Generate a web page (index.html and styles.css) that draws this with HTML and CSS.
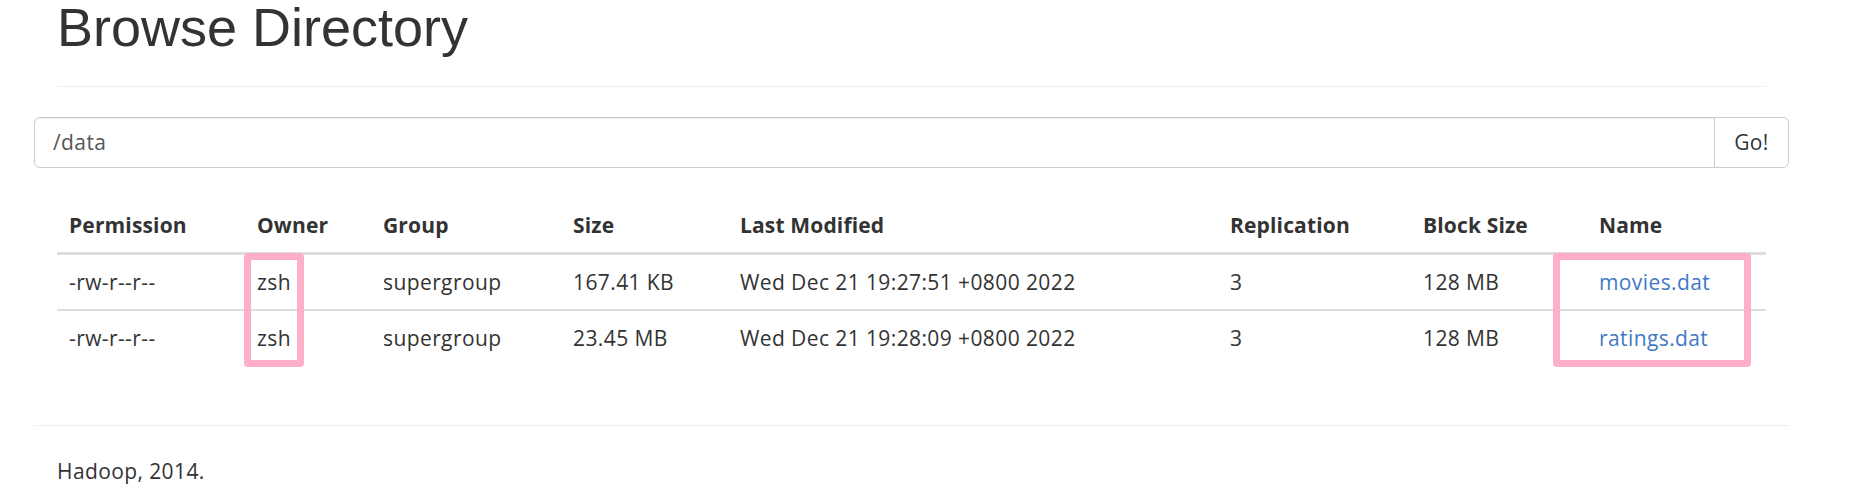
FILE: index.html
```html
<!DOCTYPE html>
<html lang="en">
<head>
<meta charset="utf-8">
<title>Browsing HDFS</title>
<link rel="stylesheet" href="styles.css">
</head>
<body>
<div class="container">
  <div class="page-header"><h1>Browse Directory</h1></div>
  <div class="row">
    <form class="input-group" onsubmit="return false;">
      <input type="text" class="form-control" value="/data">
      <button class="btn" type="button">Go!</button>
    </form>
  </div>
  <div class="panel">
    <table class="table">
      <thead>
        <tr>
          <th class="c-perm">Permission</th>
          <th class="c-owner">Owner</th>
          <th class="c-group">Group</th>
          <th class="c-size">Size</th>
          <th class="c-mod">Last Modified</th>
          <th class="c-rep">Replication</th>
          <th class="c-block">Block Size</th>
          <th class="c-name">Name</th>
        </tr>
      </thead>
      <tbody>
        <tr>
          <td>-rw-r--r--</td>
          <td>zsh</td>
          <td>supergroup</td>
          <td>167.41 KB</td>
          <td>Wed Dec 21 19:27:51 +0800 2022</td>
          <td>3</td>
          <td>128 MB</td>
          <td><a href="#">movies.dat</a></td>
        </tr>
        <tr>
          <td>-rw-r--r--</td>
          <td>zsh</td>
          <td>supergroup</td>
          <td>23.45 MB</td>
          <td>Wed Dec 21 19:28:09 +0800 2022</td>
          <td>3</td>
          <td>128 MB</td>
          <td><a href="#">ratings.dat</a></td>
        </tr>
      </tbody>
    </table>
    <div class="mark mark-owner"></div>
    <div class="mark mark-name"></div>
  </div>
  <hr class="rule">
  <p class="footer">Hadoop, 2014.</p>
</div>
</body>
</html>
```

FILE: styles.css
```css
html, body {
  margin: 0;
  padding: 0;
  background: #fff;
}

body {
  font-family: "Open Sans", "Noto Sans", "Liberation Sans", sans-serif;
  font-size: 21px;
  line-height: 30px;
  letter-spacing: 0.4px;
  color: #333;
}

.container {
  box-sizing: border-box;
  width: 1755px;
  margin-left: 34px;
  padding: 0 23px;
}

.page-header {
  margin: 0 0 30px;
  padding-bottom: 13.5px;
  border-bottom: 1px solid #eee;
}

.page-header h1 {
  margin: -2px 0 15px;
  font-family: "Liberation Sans", Arial, sans-serif;
  font-size: 54px;
  font-weight: 400;
  line-height: 59.4px;
  letter-spacing: 0;
  color: #333;
}

.row {
  margin: 0 -23px;
}

.input-group {
  display: flex;
  margin: 0;
}

.form-control {
  flex: 1;
  box-sizing: border-box;
  height: 51px;
  margin: 0;
  padding: 9px 18px;
  font-family: inherit;
  font-size: 21px;
  line-height: 30px;
  letter-spacing: 0.4px;
  color: #555;
  background: #fff;
  border: 1px solid #ccc;
  border-radius: 6px 0 0 6px;
  box-shadow: inset 0 1px 1px rgba(0, 0, 0, 0.075);
  outline: none;
}

.btn {
  box-sizing: border-box;
  height: 51px;
  width: 75px;
  margin-left: -1px;
  padding: 9px 0;
  font-family: inherit;
  font-size: 21px;
  line-height: 30px;
  letter-spacing: 0.4px;
  color: #333;
  background: #fff;
  border: 1px solid #ccc;
  border-radius: 0 6px 6px 0;
}

.panel {
  position: relative;
  margin-top: 30px;
  padding-bottom: 30px;
}

.table {
  width: 100%;
  table-layout: fixed;
  border-collapse: collapse;
  border-spacing: 0;
  margin: 0;
}

.table th,
.table td {
  box-sizing: border-box;
  padding: 12px;
  line-height: 30px;
  text-align: left;
  vertical-align: top;
  white-space: nowrap;
}

.table th {
  font-weight: 700;
  letter-spacing: 0.15px;
  border-bottom: 3px solid #ddd;
}

.table td {
  border-top: 2px solid #ddd;
}

.c-perm { width: 188px; }
.c-owner { width: 126px; }
.c-group { width: 190px; }
.c-size { width: 167px; }
.c-mod { width: 490px; }
.c-rep { width: 193px; }
.c-block { width: 176px; }
.c-name { width: 179px; }

.table a {
  color: #4179c4;
  text-decoration: none;
}

.mark {
  position: absolute;
  top: 55px;
  height: 114px;
  box-sizing: border-box;
  border: 7px solid #ffaec9;
  border-radius: 4px;
}

.mark-owner {
  left: 187px;
  width: 60px;
}

.mark-name {
  left: 1496px;
  width: 198px;
}

.rule {
  margin: 30px -23px;
  border: 0;
  border-top: 1px solid #eee;
}

.footer {
  margin: 0;
  font-size: 21px;
  line-height: 30px;
}
```
